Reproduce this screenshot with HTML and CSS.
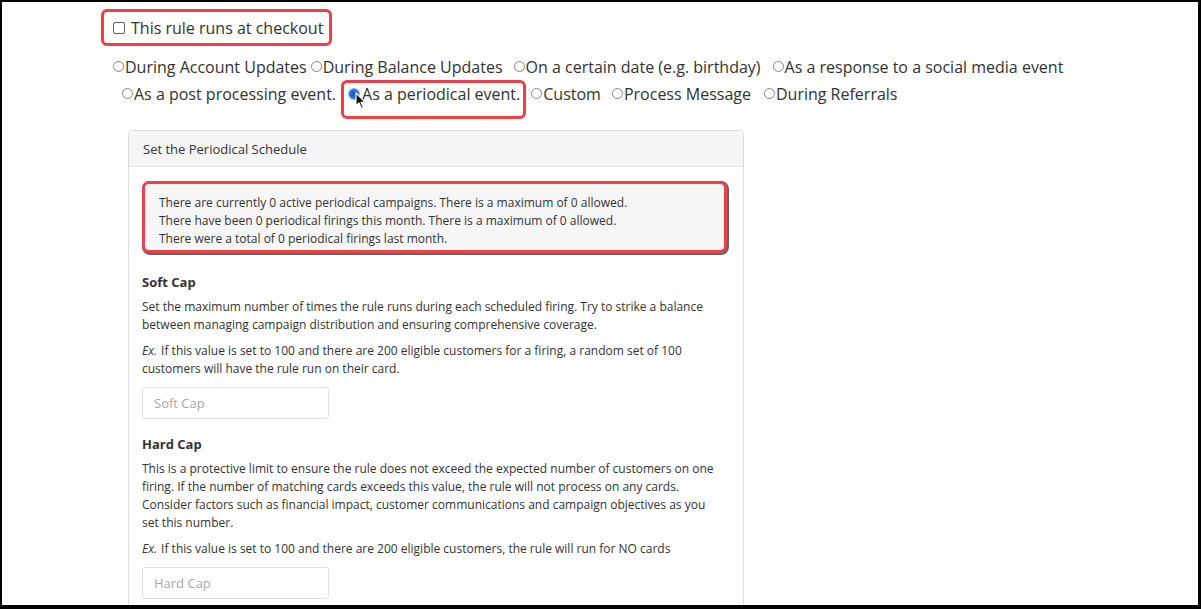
FILE: index.html
```html
<!DOCTYPE html>
<html>
<head>
<meta charset="utf-8">
<link rel="stylesheet" href="styles.css">
</head>
<body>
<div class="frame">
  <div class="content">
    <div class="checkout-row">
      <label class="checkout hl">
        <span class="cb"></span>
        <span>This rule runs at checkout</span>
      </label>
    </div>
    <div class="radios">
      <div class="rrow r1">
        <span class="opt"><span class="radio"></span>During Account Updates</span>
        <span class="opt o2"><span class="radio"></span>During Balance Updates</span>
        <span class="opt o3"><span class="radio"></span>On a certain date (e.g. birthday)</span>
        <span class="opt o4"><span class="radio"></span>As a response to a social media event</span>
      </div>
      <div class="rrow r2">
        <span class="opt"><span class="radio"></span>As a post processing event.</span>
        <span class="opt sel">
          <span class="radio on"></span>As a periodical event.
          <svg class="cursor" width="12" height="18" viewBox="0 0 12 18"><path d="M1 1 L1 14 L4 11 L6.5 16.5 L8.5 15.6 L6 10.3 L10.2 10.3 Z" fill="#111" stroke="#fff" stroke-width="1.2" stroke-linejoin="round"/></svg>
        </span>
        <span class="opt o7"><span class="radio"></span>Custom</span>
        <span class="opt o8"><span class="radio"></span>Process Message</span>
        <span class="opt o9"><span class="radio"></span>During Referrals</span>
      </div>
    </div>
    <div class="panel">
      <div class="panel-head">Set the Periodical Schedule</div>
      <div class="panel-body">
        <div class="well">
          <div>There are currently 0 active periodical campaigns. There is a maximum of 0 allowed.</div>
          <div>There have been 0 periodical firings this month. There is a maximum of 0 allowed.</div>
          <div>There were a total of 0 periodical firings last month.</div>
        </div>
        <h4 class="cap-title first">Soft Cap</h4>
        <p class="desc">Set the maximum number of times the rule runs during each scheduled firing. Try to strike a balance between managing campaign distribution and ensuring comprehensive coverage.</p>
        <p class="desc ex"><em class="exlabel">Ex.</em> If this value is set to 100 and there are 200 eligible customers for a firing, a random set of 100 customers will have the rule run on their card.</p>
        <input class="field" type="text" placeholder="Soft Cap">
        <h4 class="cap-title">Hard Cap</h4>
        <p class="desc">This is a protective limit to ensure the rule does not exceed the expected number of customers on one firing. If the number of matching cards exceeds this value, the rule will not process on any cards. Consider factors such as financial impact, customer communications and campaign objectives as you set this number.</p>
        <p class="desc ex"><em class="exlabel">Ex.</em> If this value is set to 100 and there are 200 eligible customers, the rule will run for NO cards</p>
        <input class="field" type="text" placeholder="Hard Cap">
      </div>
    </div>
  </div>
</div>
</body>
</html>
```

FILE: styles.css
```css
html, body {
  margin: 0;
  padding: 0;
  background: #fff;
}
body {
  width: 1201px;
  height: 609px;
  overflow: hidden;
  font-family: "Open Sans", "Liberation Sans", sans-serif;
  color: #333;
}
.frame {
  box-sizing: border-box;
  width: 1201px;
  height: 609px;
  border-top: 2px solid #000;
  border-left: 2px solid #000;
  border-right: 3px solid #000;
  border-bottom: 4px solid #000;
  background: #fefefd;
  overflow: hidden;
}
.content {
  padding-left: 99px;
}
.checkout-row {
  padding-top: 7px;
  display: flex;
}
.hl {
  border: 3px solid #ee4048;
  border-radius: 6px;
}
.checkout {
  display: flex;
  align-items: center;
  gap: 6px;
  height: 31px;
  padding: 0 6px 0 9px;
  font-size: 16px;
  color: #333;
}
.cb {
  width: 10px;
  height: 10px;
  border: 1px solid #666;
  border-radius: 2px;
  background: #fff;
}
.radios {
  margin-top: 7px;
  font-size: 16px;
}
.rrow {
  display: flex;
  align-items: center;
  height: 27px;
}
.r1 {
  padding-left: 12px;
}
.r2 {
  padding-left: 21px;
}
.opt {
  display: inline-flex;
  align-items: center;
  white-space: nowrap;
}
.radio {
  width: 9px;
  height: 9px;
  border: 1px solid #888;
  border-radius: 50%;
  margin-right: 1px;
  background: #fff;
}
.o2 { margin-left: 4px; }
.o3 { margin-left: 11px; }
.o4 { margin-left: 12px; }
.sel {
  position: relative;
  align-self: stretch;
  margin-left: 12px;
}
.sel::after {
  content: "";
  position: absolute;
  left: -7px;
  right: -6px;
  top: 0;
  bottom: -12px;
  border: 3px solid #ee4048;
  border-radius: 6px;
  pointer-events: none;
}
.radio.on {
  width: 10px;
  height: 10px;
  border: 1px solid #8fb4ee;
  background: radial-gradient(circle, #1d5fd0 0 3px, #2f78e6 3.5px);
  margin-right: 2px;
}
.cursor {
  position: absolute;
  left: 7px;
  top: 12px;
}
.o7 { margin-left: 11px; }
.o8 { margin-left: 11px; }
.o9 { margin-left: 13px; }

.panel {
  margin-top: 23px;
  margin-left: 27px;
  width: 616px;
  box-sizing: border-box;
  border: 1px solid #ddd;
  border-radius: 4px;
  background: #fff;
}
.panel-head {
  height: 36px;
  box-sizing: border-box;
  display: flex;
  align-items: center;
  padding-left: 14px;
  font-size: 13px;
  background: #f5f5f5;
  border-bottom: 1px solid #e3e3e3;
  border-radius: 4px 4px 0 0;
}
.panel-body {
  padding: 14px 14px 20px 13px;
}
.well {
  box-sizing: border-box;
  height: 72px;
  padding: 10px 14px;
  background: #f6f6f6;
  font-size: 12px;
  line-height: 18px;
  border: 3px solid #ee4048;
  border-radius: 7px;
  box-shadow: 1px 1px 0 1px #666;
  width: 585px;
}
.cap-title {
  margin: 20px 0 0 0;
  font-size: 13px;
  font-weight: 700;
  line-height: 18px;
}
.desc {
  margin: 7px 0 0 0;
  font-size: 12px;
  line-height: 18px;
  max-width: 578px;
}
.desc.ex {
  margin-top: 8px;
}
.exlabel {
  display: inline-block;
  padding-right: 1px;
}
.field {
  display: block;
  box-sizing: border-box;
  margin-top: 9px;
  width: 187px;
  height: 32px;
  border: 1px solid #e2e2e2;
  border-radius: 3px;
  padding: 0 11px;
  font-family: "Open Sans", "Liberation Sans", sans-serif;
  font-size: 13px;
  color: #333;
  background: #fff;
}
.field::placeholder {
  color: #a8a8a8;
}
.cap-title:not(.first) {
  margin-top: 16px;
}
```
